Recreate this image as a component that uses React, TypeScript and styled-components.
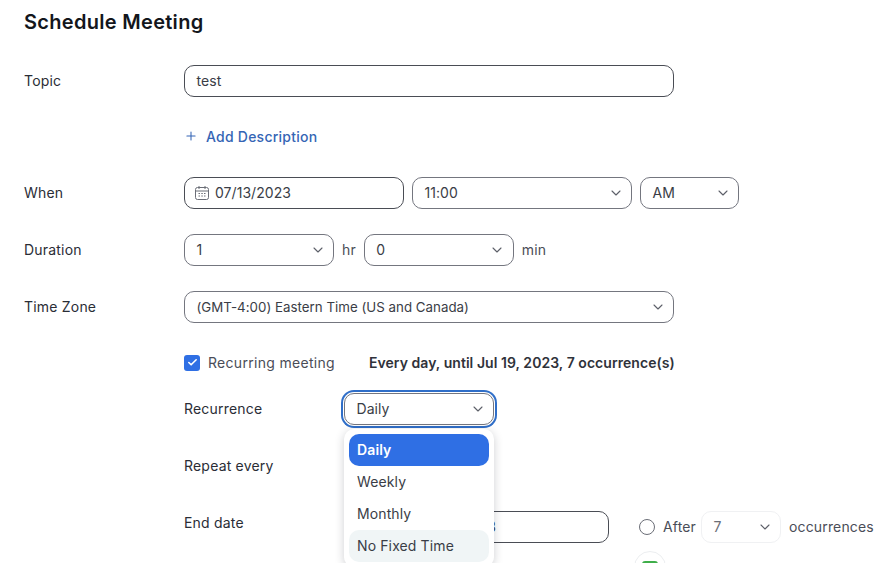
import React from 'react';
import styled, { createGlobalStyle } from 'styled-components';
import { ChevronDown, Plus, Check } from 'lucide-react';

const Global = createGlobalStyle`
  html, body { margin: 0; padding: 0; background: #fff; height: 100%; overflow: hidden; }
  body { font-family: Inter, "Liberation Sans", sans-serif; color: #2a2d36; }
`;

const Page = styled.div`
  width: 880px;
  height: 563px;
  overflow: hidden;
  padding: 10px 0 0 24px;
  box-sizing: border-box;
  display: flex;
  flex-direction: column;
`;

const Title = styled.h1`
  margin: 0;
  font-size: 20px;
  line-height: 24px;
  font-weight: 600;
  letter-spacing: 0.3px;
  color: #13161c;
`;

const Row = styled.div<{ $top: number }>`
  display: grid;
  grid-template-columns: 160px 1fr;
  align-items: center;
  margin-top: ${p => p.$top}px;
`;

const Label = styled.div`
  font-size: 14px;
  line-height: 32px;
  letter-spacing: 0.2px;
  color: #2a2d36;
`;

const Controls = styled.div`
  display: flex;
  align-items: center;
  gap: 8px;
  font-size: 14px;
  letter-spacing: 0.15px;
  line-height: 30px;
  color: #4a4d57;
`;

const Field = styled.div<{ $w: number; $dark?: boolean; $small?: boolean }>`
  width: ${p => p.$w}px;
  height: 32px;
  box-sizing: border-box;
  border: 1px solid ${p => (p.$dark ? '#4a4d55' : '#74767f')};
  border-radius: 10px;
  padding: 0 11.5px 1px;
  display: flex;
  align-items: center;
  justify-content: space-between;
  background: #fff;
  font-size: ${p => (p.$small ? '13.3px' : '14px')};
  letter-spacing: ${p => (p.$small ? '0.02px' : '0.05px')};
  color: #3a3d46;
  flex: none;
`;

const Chevron = styled(ChevronDown)`
  width: 16px;
  height: 16px;
  color: #5c5f68;
  margin-right: -4px;
  margin-top: 1px;
  stroke-width: 1.6;
  flex: none;
`;

const AddLink = styled.div`
  display: flex;
  align-items: center;
  gap: 8px;
  margin: 30px 0 0 160px;
  height: 20px;
  padding-bottom: 2px;
  box-sizing: border-box;
  font-size: 14px;
  font-weight: 500;
  letter-spacing: 0.24px;
  color: #3565b5;
  svg { width: 14px; height: 14px; stroke-width: 1.8; }
`;

const DateField = styled(Field)`
  justify-content: flex-start;
  gap: 5px;
  padding-left: 9px;
`;

const EndDateField = styled(DateField)`
  margin-left: 45px;
`;

const Section = styled.div`
  margin-left: 160px;
  margin-top: 30px;
  position: relative;
`;

const RecurringLine = styled.div`
  display: flex;
  align-items: center;
  height: 20px;
  padding-bottom: 1px;
  box-sizing: border-box;
  font-size: 14px;
  letter-spacing: 0.3px;
  color: #4a4d57;
`;

const Box = styled.span`
  width: 16px;
  height: 16px;
  border-radius: 3px;
  background: #2f6fe4;
  color: #fff;
  display: inline-flex;
  align-items: center;
  justify-content: center;
  margin-right: 8px;
  svg { width: 11px; height: 11px; stroke-width: 3.5; }
`;

const Summary = styled.span`
  margin-left: 34px;
  font-size: 14px;
  font-weight: 600;
  letter-spacing: 0.05px;
  color: #2f323a;
`;

const SubRow = styled.div<{ $top: number }>`
  display: grid;
  grid-template-columns: 160px 1fr;
  align-items: center;
  height: 32px;
  margin-top: ${p => p.$top}px;
`;

const FocusField = styled(Field)`
  box-shadow: 0 0 0 1px #fff, 0 0 0 3px #2f6ec8;
`;

const Menu = styled.div`
  position: absolute;
  left: 160px;
  top: 76px;
  width: 150px;
  box-sizing: border-box;
  padding: 5px;
  background: #fff;
  border-radius: 10px;
  box-shadow: 0 2px 10px rgba(30, 35, 50, 0.22);
  z-index: 2;
`;

const Option = styled.div<{ $state?: 'selected' | 'hover' }>`
  height: 32px;
  line-height: 32px;
  padding: 0 8px;
  border-radius: 10px;
  font-size: 14px;
  letter-spacing: 0.12px;
  font-weight: ${p => (p.$state === 'selected' ? 600 : 400)};
  color: ${p => (p.$state === 'selected' ? '#fff' : '#3a3d46')};
  background: ${p => (p.$state === 'selected' ? '#2f6fe4' : p.$state === 'hover' ? '#f0f5f6' : 'transparent')};
`;

const Radio = styled.span`
  width: 16px;
  height: 16px;
  margin-left: 30px;
  box-sizing: border-box;
  border: 1px solid #6b6e77;
  border-radius: 50%;
  flex: none;
`;

const EndControls = styled(Controls)`
  position: relative;
  top: 4px;
  gap: 0;
`;

const AfterText = styled.span`
  margin: 0 5px 0 8px;
  color: #4a4d57;
`;

const Occurrences = styled(Field)`
  border-color: #f0f1f3;
  color: #6b6e77;
  margin-right: 8px;
`;

const FloatBadge = styled.div`
  position: absolute;
  left: 450px;
  top: 198px;
  width: 32px;
  height: 32px;
  box-sizing: border-box;
  border-radius: 50%;
  background: #fff;
  border: 1px solid #eceef0;
  display: flex;
  justify-content: center;
  padding-top: 9px;
  &::before {
    content: '';
    width: 16px;
    height: 16px;
    box-sizing: border-box;
    border: 2px solid #3fae4a;
    border-radius: 3px;
  }
`;

const CalendarIcon = () => (
  <svg width="16" height="16" viewBox="0 0 16 16" fill="none" stroke="#6b6e77" strokeWidth="1">
    <rect x="1.5" y="2.5" width="13" height="12" rx="2" />
    <path d="M1.5 6h13M5 1v3M11 1v3" />
    <path d="M4.5 8.5h1.5M7.3 8.5h1.5M10 8.5h1.5M4.5 11h1.5M7.3 11h1.5M10 11h1.5" />
  </svg>
);

export default function App() {
  return (
    <Page>
      <Global />
      <Title>Schedule Meeting</Title>
      <Row $top={31}>
        <Label>Topic</Label>
        <Controls><Field $w={490} $dark>test</Field></Controls>
      </Row>
      <AddLink><Plus />Add Description</AddLink>
      <Row $top={30}>
        <Label>When</Label>
        <Controls>
          <DateField $w={220} $dark><CalendarIcon />07/13/2023</DateField>
          <Field $w={220}>11:00<Chevron /></Field>
          <Field $w={99}>AM<Chevron /></Field>
        </Controls>
      </Row>
      <Row $top={25}>
        <Label>Duration</Label>
        <Controls>
          <Field $w={150}>1<Chevron /></Field>
          hr
          <Field $w={150}>0<Chevron /></Field>
          min
        </Controls>
      </Row>
      <Row $top={25}>
        <Label>Time Zone</Label>
        <Controls><Field $w={490} $small>(GMT-4:00) Eastern Time (US and Canada)<Chevron /></Field></Controls>
      </Row>
      <Section>
        <RecurringLine>
          <Box><Check /></Box>
          Recurring meeting
          <Summary>Every day, until Jul 19, 2023, 7 occurrence(s)</Summary>
        </RecurringLine>
        <SubRow $top={20}>
          <Label>Recurrence</Label>
          <Controls><FocusField $w={150}>Daily<Chevron /></FocusField></Controls>
        </SubRow>
        <Menu>
          <Option $state="selected">Daily</Option>
          <Option>Weekly</Option>
          <Option>Monthly</Option>
          <Option $state="hover">No Fixed Time</Option>
        </Menu>
        <SubRow $top={25}>
          <Label>Repeat every</Label>
          <Controls />
        </SubRow>
        <SubRow $top={25}>
          <Label>End date</Label>
          <EndControls>
            <EndDateField $w={220} $dark><CalendarIcon />07/19/2023</EndDateField>
            <Radio />
            <AfterText>After</AfterText>
            <Occurrences $w={80}>7<Chevron /></Occurrences>
            occurrences
          </EndControls>
        </SubRow>
        <FloatBadge />
      </Section>
    </Page>
  );
}
